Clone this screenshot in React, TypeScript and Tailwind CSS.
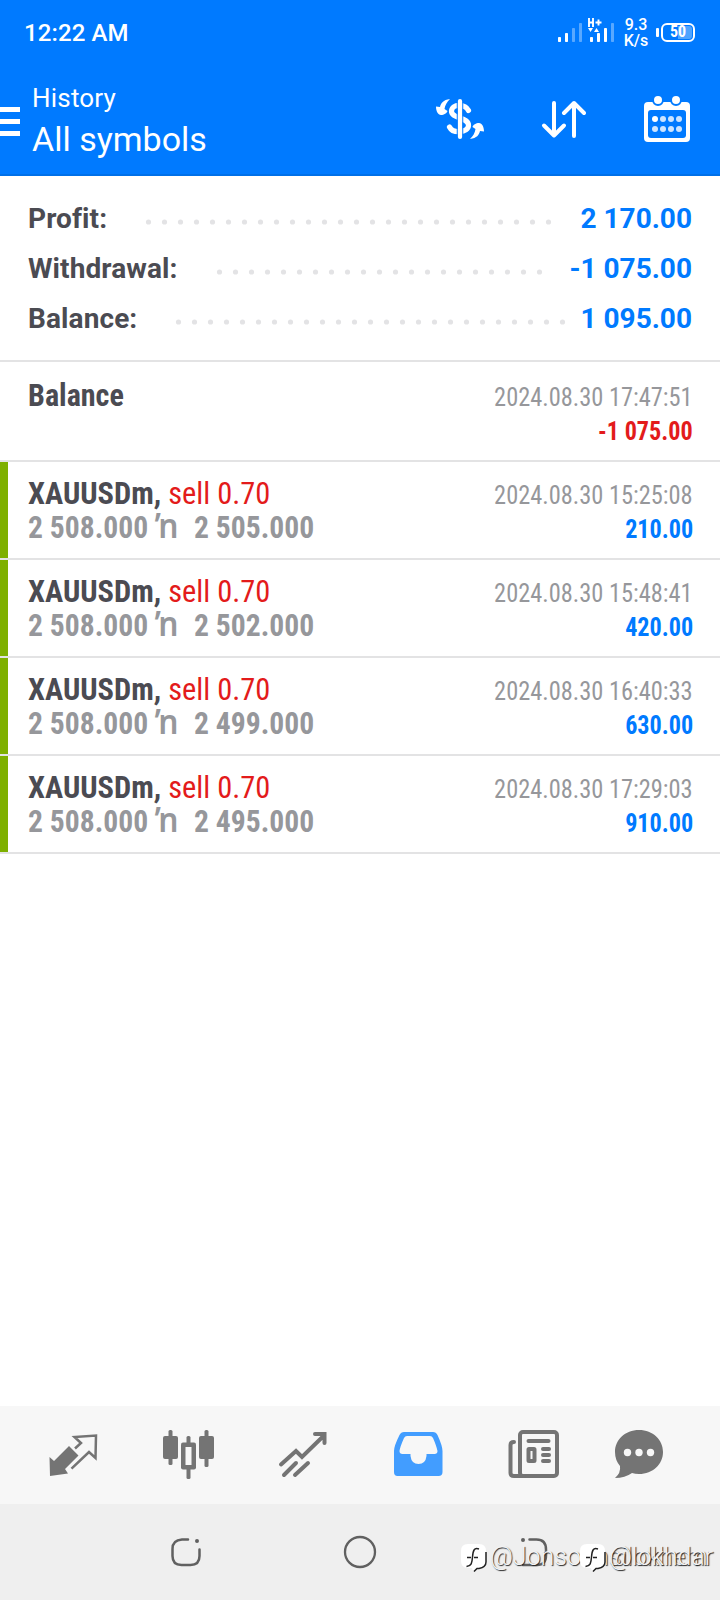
import type { ReactNode } from "react";

interface Deal {
  prices: [string, string];
  time: string;
  profit: string;
}

const summary = [
  { label: "Profit:", value: "2 170.00", start: 145, dots: 26 },
  { label: "Withdrawal:", value: "-1 075.00", start: 216, dots: 21 },
  { label: "Balance:", value: "1 095.00", start: 175, dots: 25 },
];

const deals: Deal[] = [
  { prices: ["2 508.000", "2 505.000"], time: "2024.08.30 15:25:08", profit: "210.00" },
  { prices: ["2 508.000", "2 502.000"], time: "2024.08.30 15:48:41", profit: "420.00" },
  { prices: ["2 508.000", "2 499.000"], time: "2024.08.30 16:40:33", profit: "630.00" },
  { prices: ["2 508.000", "2 495.000"], time: "2024.08.30 17:29:03", profit: "910.00" },
];

function StatusBar() {
  return (
    <div className="flex h-16 items-center justify-between pl-6 pr-[25px]">
      <span className="mt-[2px] text-[24px] leading-[28px] font-medium tracking-[0.1px]">12:22 AM</span>
      <div className="flex h-16 items-center">
        <svg width="58" height="28" viewBox="0 0 58 28" fill="#fff" className="mt-[-4px]">
          <rect x="0" y="21" width="3" height="5" rx="0.8" />
          <rect x="7" y="17" width="3" height="9" rx="0.8" />
          <rect x="14" y="12" width="3" height="14" rx="0.8" opacity="0.35" />
          <rect x="21" y="7" width="3" height="19" rx="0.8" opacity="0.35" />
          <path d="M31 2v9M35 2v9M31 6.500h4M37.500 6.500h6M40.500 3.500v6" stroke="#fff" strokeWidth="1.900" fill="none" />
          <path d="M30 12h5l-2.500 4zM36 16h5l-2.500-4z" />
          <rect x="32" y="21" width="3" height="5" rx="0.8" />
          <rect x="39" y="17" width="3" height="9" rx="0.8" />
          <rect x="46" y="12" width="3" height="14" rx="0.8" />
          <rect x="53" y="7" width="3" height="19" rx="0.8" opacity="0.35" />
        </svg>
        <div className="mt-[2px] ml-[7px] w-[26px] text-center text-[16px] leading-[16px] font-medium">
          <div>9.3</div>
          <div>K/s</div>
        </div>
        <div className="ml-[7px] flex items-center gap-[2px]">
          <div className="h-[9px] w-[3px] rounded-[1px] bg-white" />
          <div className="flex h-[19px] w-[34px] items-center justify-center rounded-[6px] border-2 border-white bg-[linear-gradient(90deg,transparent_50%,#4fa4ff_50%)] bg-clip-content p-[1px] font-['Roboto_Condensed'] text-[16px] leading-[14px] font-bold">
            50
          </div>
        </div>
      </div>
    </div>
  );
}

function Header() {
  return (
    <header className="h-[176px] border-b-2 border-[#0070e8] bg-[#007aff] text-white">
      <StatusBar />
      <div className="flex h-[110px] items-center">
        <div className="mt-[5px] flex w-5 flex-col gap-[7px]">
          <div className="h-[5px] bg-white" />
          <div className="h-[5px] bg-white" />
          <div className="h-[5px] bg-white" />
        </div>
        <div className="mt-[3px] ml-3 flex-1">
          <div className="text-[26px] leading-[30px] tracking-[0.2px]">History</div>
          <div className="mt-[6px] text-[34px] leading-[40px]">All symbols</div>
        </div>
        <svg width="50" height="44" viewBox="0 0 50 44" fill="none" className="mr-[55px]">
          <path d="M33.500 13.500C30 6.500 17 6.500 16.500 14C16 22 34 20 33.500 28.500C33 36 18 37 14.500 30" stroke="#fff" strokeWidth="5.200" strokeLinecap="round" />
          <path d="M22.300 5v34M27.700 5v34" stroke="#007aff" strokeWidth="1.100" />
          <path d="M25 4v36" stroke="#fff" strokeWidth="4.200" strokeLinecap="round" />
          <path d="M15 2C8 3 6 6 5 10L1 9.500C1 14 3 18 6 18C9 18 12 16 12.500 14L9.500 12C10 8 12 5 15 2z" fill="#fff" />
          <path d="M35 42C42 41 44 38 45 34L49 34.500C49 30 47 26 44 26C41 26 38 28 37.500 30L40.500 32C40 36 38 39 35 42z" fill="#fff" />
        </svg>
        <svg width="46" height="40" viewBox="0 0 46 40" fill="none" stroke="#fff" strokeWidth="4" strokeLinecap="round" className="mr-[58px]">
          <path d="M14 4v32M4 26.500l10 10l10-10" strokeLinejoin="round" />
          <path d="M34 37V4M24 14l10-10l10 10" strokeLinejoin="round" />
        </svg>
        <svg width="46" height="46" viewBox="0 0 46 46" className="mr-[30px]">
          <rect x="0" y="6" width="46" height="40" rx="4" fill="#fff" />
          <rect x="4" y="14" width="38" height="28" rx="3" fill="#007aff" />
          {[14, 32].map((x) => (
            <circle key={x} cx={x} cy="4" r="5" fill="#fff" stroke="#007aff" strokeWidth="2" />
          ))}
          {[11, 19, 27, 35].map((x) => (
            <g key={x} fill="#fff">
              <circle cx={x} cy="23" r="3" opacity={x === 11 ? 1 : 0.8} />
              <circle cx={x} cy="33" r="3" opacity="0.8" />
            </g>
          ))}
        </svg>
      </div>
    </header>
  );
}

function Dots({ count }: { count: number }) {
  return (
    <svg width={count * 16} height="6" fill="#e3e3e5">
      {Array.from({ length: count }, (_, i) => (
        <circle key={i} cx={3.5 + i * 16} cy="3" r="2.600" />
      ))}
    </svg>
  );
}

function Summary() {
  return (
    <section className="h-[186px] border-b-2 border-[#e3e3e4] pt-[18px] pr-7 text-[28px] font-bold">
      {summary.map((row) => (
        <div key={row.label} className="flex h-[50px] items-center">
          <div className="shrink-0 pl-7 tracking-[0.1px] text-[#4b4b52]" style={{ width: row.start }}>
            {row.label}
          </div>
          <div className="mt-[6px] flex">
            <Dots count={row.dots} />
          </div>
          <div className="flex-1 text-right whitespace-nowrap text-[#007aff]">{row.value}</div>
        </div>
      ))}
    </section>
  );
}

interface RowProps {
  left: ReactNode;
  time: string;
  amount: string;
  color: string;
}

function Row({ left, time, amount, color }: RowProps) {
  return (
    <div className="flex flex-1 justify-between pr-[27px] pl-5 font-['Roboto_Condensed']">
      <div className="text-[32px] leading-[34px] font-bold whitespace-pre text-[#4b4b52]">{left}</div>
      <div className="mt-[2px] flex flex-col items-end text-[26px] leading-[34px]">
        <div className="origin-right scale-x-[0.938] text-[#96979b]">{time}</div>
        <div className={color + " origin-right scale-x-[0.93] font-bold"}>{amount}</div>
      </div>
    </div>
  );
}

function History() {
  return (
    <section>
      <div className="flex h-[100px] border-b-2 border-[#e3e3e4] pt-[16px]">
        <div className="w-2" />
        <Row
          left={<div className="origin-left scale-x-[0.94]">Balance</div>}
          time="2024.08.30 17:47:51"
          amount="-1 075.00"
          color="text-[#e31b1b]"
        />
      </div>
      {deals.map((deal) => (
        <div key={deal.time} className="flex h-[98px] border-b-2 border-[#e3e3e4]">
          <div className="w-2 bg-[#7eb000]" />
          <div className="flex flex-1 pt-[14px]">
            <Row
              left={
                <>
                  <div className="w-max origin-left scale-x-[0.95]">
                    XAUUSDm, <span className="font-normal text-[#e31b1b]">sell 0.70</span>
                  </div>
                  <div className="flex h-[34px] text-[#96979b]">
                    <span className="w-[127px] origin-left scale-x-[0.925]">{deal.prices[0]}</span>
                    <span className="mt-[-2px] w-[39px] origin-left scale-x-[0.93] font-['Noto_Sans'] text-[34px] font-semibold">ŉ</span>
                    <span className="origin-left scale-x-[0.925]">{deal.prices[1]}</span>
                  </div>
                </>
              }
              time={deal.time}
              amount={deal.profit}
              color="text-[#007aff]"
            />
          </div>
        </div>
      ))}
    </section>
  );
}

function TabBar() {
  return (
    <nav className="flex h-[98px] items-center bg-[#f7f7f7] pb-[2px] pl-[48px] text-[#747474]">
      <svg width="50" height="50" viewBox="0 0 50 50" className="mr-[64px]">
        <path d="M21 17L30.500 26.500L17 40L20 44.500L2 47L1.500 28L6 32z" fill="currentColor" />
        <path d="M27 19.500L33 14L26.500 8L48 6.500L47.500 29L41 23L23.500 39.700" fill="none" stroke="currentColor" strokeWidth="2.500" />
      </svg>
      <svg width="52" height="50" viewBox="0 0 52 50" fill="currentColor" className="mr-[64px]">
        <rect x="1" y="7" width="15" height="23" rx="2" />
        <rect x="6.500" y="1" width="4" height="35" rx="1.500" />
        <rect x="37" y="7" width="15" height="23" rx="2" />
        <rect x="42.500" y="1" width="4" height="37" rx="1.500" />
        <rect x="24.500" y="7" width="4" height="43" rx="1.500" />
        <rect x="19" y="13.500" width="15" height="27" rx="2" />
        <rect x="23.500" y="18" width="6" height="18" fill="#f7f7f7" />
      </svg>
      <svg width="50" height="50" viewBox="0 0 50 50" fill="none" stroke="currentColor" strokeWidth="4" className="mr-[65px]">
        <path d="M3 35.500L18 22L24 28L46 6.500M37 5h9.500v9" strokeLinecap="round" />
        <path d="M6 46L18 34M17 46L30 34" strokeLinecap="round" />
      </svg>
      <svg width="50" height="50" viewBox="0 0 50 50" className="mr-[65px]">
        <path fillRule="evenodd" fill="#429dff" d="M11 3h29q3 0 4.500 3q5 11 5 16v21q0 4-4 4h-41q-3.500 0-3.500-4V22q0-5 5.500-16q1.500-3 4.500-3zM14 7q-2 0-3 2q-4 9-4.500 13q0 3 3 3h8v2q1 8 8 8t8-8v-2h8q3 0 3-3q-1-5-4.500-13q-1-2-3-2z" />
      </svg>
      <svg width="52" height="50" viewBox="0 0 52 50" fill="none" stroke="currentColor" strokeWidth="4" strokeLinecap="round" className="mr-[54px]">
        <rect x="12" y="3" width="37" height="44" rx="3" />
        <path d="M6 13q-3.500 0-3.500 3v28q0 3 3.500 3h10" />
        <path d="M20.500 12h20M35 20h6M35 26h6M35 32h6" />
        <rect x="20.500" y="20" width="6" height="12" rx="0.500" />
      </svg>
      <svg width="50" height="50" viewBox="0 0 50 50">
        <path fill="currentColor" d="M25 1C39 1 49 11 49 23S39 45 25 45Q21 45 18 44Q11 49 1 49Q7 44 6 37Q1 31 1 23C1 11 11 1 25 1z" />
        {[13.5, 25, 36.5].map((x) => (
          <circle key={x} cx={x} cy="23.500" r="3.700" fill="#f7f7f7" />
        ))}
      </svg>
    </nav>
  );
}

function Signature({ name }: { name: string }) {
  return (
    <div className="flex items-center text-[25px] leading-[30px] font-light whitespace-nowrap text-[#f4f4f4] [text-shadow:1px_1px_1px_#222]">
      <svg width="27" height="29" viewBox="0 0 27 29" className="mr-[2px]">
        <path d="M7 1h11q7 0 7 7v10q0 7-7 7h-2l-4 3l-1-3H7q-7 0-7-7V8q0-7 7-7z" fill="#fff" />
        <path
          d="M25 9v10q0 5-7 6.500h-2l-3 3M18 6c-5-2-6 2-6.500 8s-1 9-6 9.500M6 14.500h4M13 14.500h4"
          fill="none"
          stroke="#222"
          strokeWidth="1.500"
        />
      </svg>
      {name}
    </div>
  );
}

function SystemNav() {
  return (
    <div className="relative h-24 bg-[#efefef]">
      <div className="flex h-24 items-center pl-[170px]">
        <svg width="32" height="32" viewBox="0 0 32 32" fill="none" stroke="#606060" strokeWidth="2.500" strokeLinecap="round" className="mr-[141px]">
          <path d="M18 3.500h-6Q2.500 4 2.500 13v7q0 9 9 9h9q9 0 9-9v-6.500" />
          <circle cx="27" cy="5" r="1" fill="#606060" strokeWidth="2" />
        </svg>
        <svg width="34" height="34" viewBox="0 0 34 34" className="mr-[143px]">
          <circle cx="17" cy="17" r="15" fill="none" stroke="#606060" strokeWidth="2.300" />
        </svg>
        <svg width="32" height="32" viewBox="0 0 32 32" fill="none" stroke="#606060" strokeWidth="2.500" strokeLinecap="round">
          <path d="M9.500 3.500h7q9.500 0 9.500 10v6q0 9.500-9 9.500H3" />
          <circle cx="3" cy="4" r="1" fill="#606060" strokeWidth="2" />
        </svg>
      </div>
      <div className="absolute top-[38px] left-[461px]">
        <Signature name="@Jonsonnsilokhem" />
      </div>
      <div className="absolute top-[38px] left-[580px]">
        <Signature name="@lokhdar" />
      </div>
    </div>
  );
}

export default function App() {
  return (
    <div className="flex h-[1600px] w-[720px] flex-col overflow-hidden bg-white font-[Roboto,sans-serif]">
      <Header />
      <main className="flex-1">
        <Summary />
        <History />
      </main>
      <TabBar />
      <SystemNav />
    </div>
  );
}
